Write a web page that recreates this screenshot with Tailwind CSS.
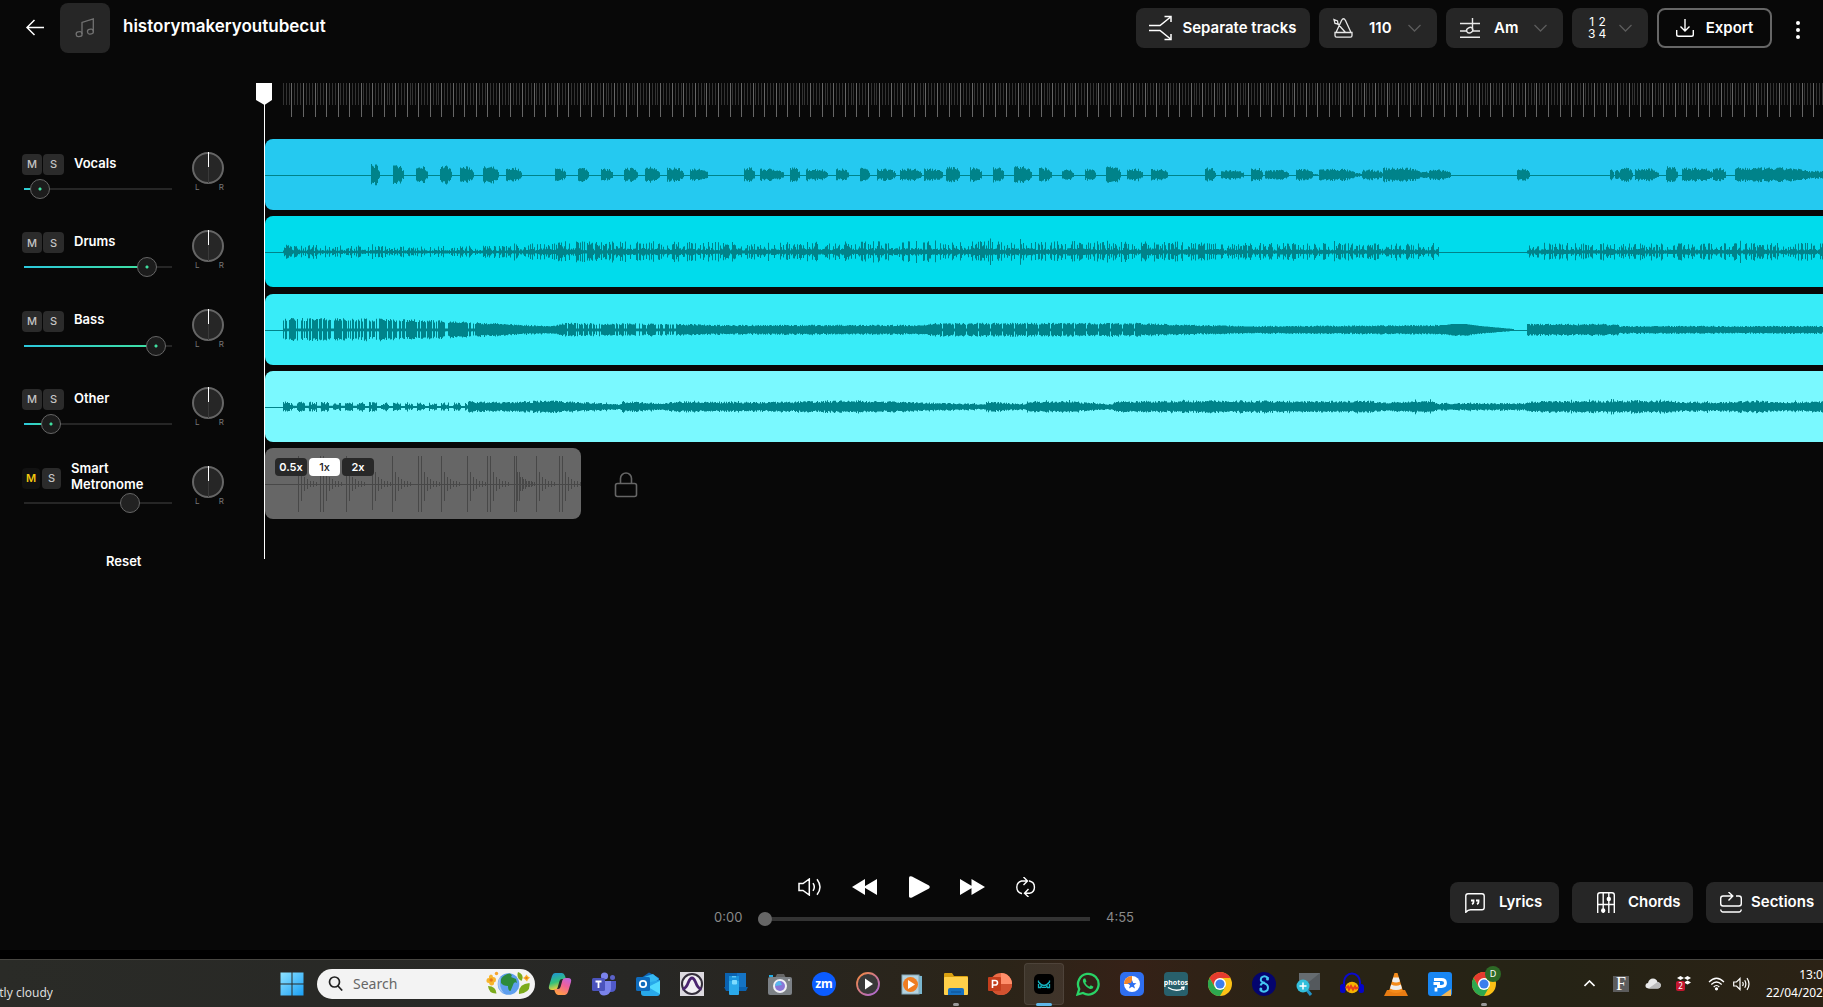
<!DOCTYPE html>
<html lang="en">
<head>
    <meta charset="UTF-8">
    <meta name="viewport" content="width=device-width, initial-scale=1.0">
    <title>historymakeryoutubecut</title>
    <!-- Tailwind CSS -->
    <script src="https://cdn.jsdelivr.net/npm/@tailwindcss/browser@4"></script>
</head>
<body class="h-screen overflow-hidden bg-black text-white font-['Inter','Liberation_Sans',sans-serif] flex flex-col">
    <div class="flex-1 min-h-0 mb-[9px] bg-[#080808] flex flex-col">

        <!-- Header -->
        <header class="flex items-start justify-between pl-[22px] pr-[10px] pt-[3px] h-[83px] shrink-0">
            <div class="flex items-center">
                <button aria-label="Back" class="w-[26px] h-8 flex items-center justify-center">
                    <svg class="w-[20px] h-[18px]" viewBox="0 0 20 18" fill="none" stroke="#fff" stroke-width="1.5"><path d="M19 8.5H2M9.500 1L2 8.500L9.500 16"/></svg>
                </button>
                <div class="ml-3 w-[50px] h-[50px] rounded-lg bg-[#262626] flex items-center justify-center">
                    <svg class="w-5 h-5" viewBox="0 0 20 20" fill="none" stroke="#727272" stroke-width="1.3"><path d="M7 16V4.500L18.300 1V13.500"/><rect x="1.200" y="13.800" width="5.800" height="4.800" rx="2.200" transform="rotate(-8 4 16)"/><rect x="12.500" y="11.300" width="5.800" height="4.800" rx="2.200" transform="rotate(-8 15 13.500)"/></svg>
                </div>
                <h1 class="ml-[13px] text-[17px] leading-6 font-semibold pb-1">historymakeryoutubecut</h1>
            </div>
            <div class="flex items-center pt-[5px]">
                <div class="flex gap-[9px] text-[15px] font-semibold">
                    <button class="h-10 w-[174px] rounded-lg bg-[#262626] flex items-center justify-center gap-[10px] whitespace-nowrap">
                        <svg class="w-[23px] h-8" viewBox="0 0 23 32" fill="none" stroke="#fff" stroke-width="1.5"><path d="M0 13.500H11L21 5.500M0 18.500H11L21 26.500M15.500 4.500H22V10M15.500 27.500H22V22"/></svg>
                        Separate tracks
                    </button>
                    <button class="h-10 w-[118px] rounded-lg bg-[#262626] flex items-center pl-[14px]">
                        <svg class="w-5 h-5" viewBox="0 0 20 20" fill="none" stroke="#e8e8e8" stroke-width="1.3"><path d="M3 14.500L8.500 2.500Q10.500 -1 12.500 2.500L18 14.500M2 14.500V17.500Q2 19.200 3.500 19.200H17.500Q19 19.200 19 17.500V14.500ZM12.500 14.500L4.500 5.500"/><path d="M1 1.500L4.500 3L5 6L2 5.500Z"/></svg>
                        <span class="ml-4">110</span>
                        <svg class="ml-auto mr-4 w-[13px] h-2" viewBox="0 0 13 8" fill="none" stroke="#5c5c5c" stroke-width="1.300"><path d="M0.500 1L6.500 7L12.500 1"/></svg>
                    </button>
                    <button class="h-10 w-[117px] rounded-lg bg-[#262626] flex items-center pl-[14px]">
                        <svg class="w-5 h-5" viewBox="0 0 20 20" fill="none" stroke="#e8e8e8" stroke-width="1.400"><path d="M0 5.500H20M0 13H7M13 13H20M0 19.200H20M12.500 0V12"/><ellipse cx="9.700" cy="12.200" rx="3.200" ry="2.600" transform="rotate(-25 9.700 12.200)"/></svg>
                        <span class="ml-[14px]">Am</span>
                        <svg class="ml-auto mr-4 w-[13px] h-2" viewBox="0 0 13 8" fill="none" stroke="#5c5c5c" stroke-width="1.300"><path d="M0.500 1L6.500 7L12.500 1"/></svg>
                    </button>
                    <button class="h-10 w-[76px] rounded-lg bg-[#262626] flex items-center pl-4">
                        <span class="grid grid-cols-2 gap-x-[3px] text-xs leading-3 font-normal text-center w-[18px]"><span>1</span><span>2</span><span>3</span><span>4</span></span>
                        <svg class="ml-auto mr-4 w-[13px] h-2" viewBox="0 0 13 8" fill="none" stroke="#5c5c5c" stroke-width="1.300"><path d="M0.500 1L6.500 7L12.500 1"/></svg>
                    </button>
                    <button class="h-10 w-[115px] rounded-lg border-2 border-[#666] flex items-center justify-center gap-3">
                        <svg class="w-[18px] h-[18px]" viewBox="0 0 18 18" fill="none" stroke="#fff" stroke-width="1.400"><path d="M9 0V11.500M4.500 7.500L9 12L13.500 7.500M0.700 11V15.500Q0.700 17.300 2.500 17.300H15.500Q17.300 17.300 17.300 15.500V11"/></svg>
                        Export
                    </button>
                </div>
                <button aria-label="More" class="ml-[11px] w-[30px] h-10 flex items-center justify-center">
                    <svg class="w-1 h-[18px] mt-1" viewBox="0 0 4 18" fill="#fff"><circle cx="2" cy="2" r="2"/><circle cx="2" cy="9" r="2"/><circle cx="2" cy="16" r="2"/></svg>
                </button>
            </div>
        </header>

        <!-- Mixer and timeline -->
        <main class="flex-1 min-h-0 grid grid-cols-[265px_1fr]">
            <section aria-label="Mixer" class="pt-[61px]">
                <div id="mixer" class="grid grid-rows-5 h-[392px]"></div>
                <button class="ml-[106px] mt-[15px] text-[13px] leading-5 font-semibold">Reset</button>
            </section>

            <section aria-label="Timeline" class="relative min-w-0">
                <svg id="ruler" class="block w-full h-[34px]" shape-rendering="crispEdges"></svg>
                <div id="lanes" class="mt-[22px] h-[380px] flex flex-col justify-between">
                    <div class="h-[71px] rounded-l-lg bg-[#25c9f0]"><svg data-wave="vocals" class="block w-full h-full"></svg></div>
                    <div class="h-[71px] rounded-l-lg bg-[#00dcec]"><svg data-wave="drums" class="block w-full h-full"></svg></div>
                    <div class="h-[71px] rounded-l-lg bg-[#38ecf8]"><svg data-wave="bass" class="block w-full h-full"></svg></div>
                    <div class="h-[71px] rounded-l-lg bg-[#7af9ff]"><svg data-wave="other" class="block w-full h-full"></svg></div>
                    <div class="flex items-center">
                        <div class="relative h-[71px] w-[316px] rounded-lg bg-[#666]">
                            <svg data-wave="metronome" class="block w-full h-full" shape-rendering="crispEdges"></svg>
                            <div class="absolute left-[10px] top-[10px] flex gap-0.5 text-[11px] font-semibold">
                                <button class="h-[18px] w-8 rounded bg-[#282828]">0.5x</button>
                                <button class="h-[18px] w-[31px] rounded bg-white text-[#222] font-medium">1x</button>
                                <button class="h-[18px] w-8 rounded bg-[#282828]">2x</button>
                            </div>
                        </div>
                        <svg class="ml-[33px] mt-0.5 w-6 h-[26px]" viewBox="0 0 24 26" fill="none" stroke="#666" stroke-width="1.600"><rect x="1.500" y="11.500" width="21" height="13" rx="2"/><path d="M6.500 11.500V6.500A5.500 5.500 0 0 1 17.500 6.500V11.500"/></svg>
                    </div>
                </div>
                <!-- Playhead -->
                <svg class="absolute -left-[9px] top-0 w-[17px] h-[476px]" viewBox="0 0 17 476"><path d="M0 0H16V17L8.500 22L0 17Z" fill="#fff"/><rect x="8" y="20" width="1" height="456" fill="#fff" shape-rendering="crispEdges"/></svg>
            </section>
        </main>

        <!-- Player -->
        <footer class="shrink-0 h-[77px] pl-[25px] grid grid-cols-[1fr_auto_1fr]">
            <div></div>
            <div class="w-[420px]">
                <div class="flex items-center h-7 pl-[84px]">
                    <button aria-label="Volume" class="w-6"><svg class="w-6 h-[18px]" viewBox="0 0 24 18" fill="none" stroke="#fff" stroke-width="1.500"><path d="M1 5.500H5L11.300 1V17L5 12.500H1ZM15 5.200Q17.600 9 15 12.800M19 1.200Q25 9 19 16.800"/></svg></button>
                    <button aria-label="Rewind" class="ml-[30px] w-[25px]"><svg class="w-[25px] h-4" viewBox="0 0 25 16" fill="#fff"><path d="M13 0V16L0 8ZM25 0V16L11.500 8Z"/></svg></button>
                    <button aria-label="Play" class="ml-8 w-[21px]"><svg class="w-[21px] h-[22px]" viewBox="0 0 21 22" fill="#fff"><path d="M0 1.500Q0.500 -0.500 3 0.500L20 9.500Q21.500 11 20 12.500L3 21.500Q0.500 22.500 0 20.500Z"/></svg></button>
                    <button aria-label="Forward" class="ml-[30px] w-[25px]"><svg class="w-[25px] h-4" viewBox="0 0 25 16" fill="#fff"><path d="M0 0V16L13.500 8ZM11.500 0V16L25 8Z"/></svg></button>
                    <button aria-label="Loop" class="ml-[29px] w-[23px]"><svg class="w-[23px] h-5" viewBox="0 0 23 20" fill="none" stroke="#fff" stroke-width="1.400"><path d="M8 16.500H7.500A6.500 6.500 0 0 1 7.500 4H13M9.500 0L13.500 4L9.500 8M15 4H15.500A6.300 6.300 0 0 1 15.500 16.300H11M14.500 12L10.500 16.200L14.500 20"/></svg></button>
                </div>
                <div class="flex items-center h-5 mt-2 text-[13px] text-[#8a8a8a]">
                    <span class="w-11 pb-0.5">0:00</span>
                    <input type="range" aria-label="Position" min="0" max="295" value="0" class="w-[332px] h-4 appearance-none bg-[linear-gradient(#333,#333)] bg-[length:100%_4px] bg-center bg-no-repeat [&::-webkit-slider-thumb]:appearance-none [&::-webkit-slider-thumb]:size-[14px] [&::-webkit-slider-thumb]:rounded-full [&::-webkit-slider-thumb]:bg-[#666]">
                    <span class="ml-auto pb-0.5">4:55</span>
                </div>
            </div>
            <div class="flex justify-end items-start gap-[13px] pt-[9px] -mr-2 text-[15px] font-semibold">
                <button class="h-[41px] w-[109px] rounded-lg bg-[#262626] flex items-center pl-[15px] gap-[14px]">
                    <svg class="w-5 h-5" viewBox="0 0 20 20" fill="none" stroke="#fff" stroke-width="1.400"><path d="M0.800 19.200V3Q0.800 0.800 3 0.800H17Q19.200 0.800 19.200 3V14.500Q19.200 16.700 17 16.700H5.500Q3 16.700 0.800 19.200Z"/><path d="M6 7.500H8.500V9Q8.500 10.500 7 11.200M11 7.500H13.500V9Q13.500 10.500 12 11.200" stroke-width="1.800"/></svg>
                    Lyrics
                </button>
                <button class="h-[41px] w-[121px] rounded-lg bg-[#262626] flex items-center pl-[25px] gap-[13px]">
                    <svg class="w-[18px] h-[21px]" viewBox="0 0 18 21" fill="none" stroke="#fff" stroke-width="1.400"><path d="M0.700 21V3Q0.700 0.700 3 0.700H15Q17.300 0.700 17.300 3V21M6.200 1V21M11.800 1V21M0.700 12.500H17.300"/><circle cx="11.800" cy="7" r="1.500" fill="#fff"/><circle cx="6.200" cy="18.500" r="1.500" fill="#fff"/></svg>
                    Chords
                </button>
                <button class="h-[41px] w-[125px] rounded-lg bg-[#262626] flex items-center pl-[14px] gap-[9px]">
                    <svg class="w-[22px] h-[21px]" viewBox="0 0 22 21" fill="none" stroke="#fff" stroke-width="1.400"><path d="M6 14H3Q0.700 14 0.700 11.500V6.500Q0.700 4 3 4H12.500M8.500 0L12.800 4L8.500 8.500M16 4H19Q21.300 4 21.300 6.500V11.500Q21.300 14 19 14H6M0.700 17.500Q1 20 3 20H19Q21 20 21.300 17.500"/></svg>
                    Sections
                </button>
            </div>
        </footer>
    </div>

    <!-- Taskbar -->
    <nav class="relative shrink-0 h-12 border-t border-[#474641] bg-[linear-gradient(90deg,#2a2b27,#272725_35%,#2b2418_55%,#352117_62%,#2a2315_70%,#252315_85%,#2b2215)] flex items-center font-['Noto_Sans','Open_Sans',sans-serif]">
        <div class="w-[53px] overflow-hidden flex justify-end text-xs leading-[18px] text-[#ddd]">
            <div class="whitespace-nowrap shrink-0"><div class="text-white">9°C</div>Partly cloudy</div>
        </div>
        <button aria-label="Start" class="ml-[227px] w-6"><svg class="w-6 h-6" viewBox="0 0 24 24"><defs><linearGradient id="win" x2="1" y2="1"><stop stop-color="#8fe2ff"/><stop offset="1" stop-color="#1aa0f5"/></linearGradient></defs><path d="M0.500 0.500h11v11h-11zM12.500 0.500h11v11h-11zM0.500 12.500h11v11h-11zM12.500 12.500h11v11h-11z" fill="url(#win)"/></svg></button>
        <div class="ml-[13px] w-[218px] h-[30px] rounded-full bg-[#f3f3f3] flex items-center pl-[11px] pr-[5px]">
            <svg class="w-[15px] h-[15px] shrink-0" viewBox="0 0 15 15" fill="none" stroke="#222" stroke-width="1.700"><circle cx="6.500" cy="6" r="5"/><path d="M10 10L14.200 14.500"/></svg>
            <input type="text" aria-label="Search" placeholder="Search" class="ml-[10px] w-0 flex-1 bg-transparent text-sm outline-none placeholder:text-[#666]">
            <svg class="w-11 h-[25px]" viewBox="0 0 44 25">
                <path d="M5 3.500Q7 3.500 7 6Q10 6 10 9Q10 11 8 11.500Q8.500 14.500 5.500 14.500Q3.500 14.500 3 12Q0 12 0.500 9Q0.500 7 3 7Q2.500 4 5 3.500Z" fill="#f7b52c"/><circle cx="5.200" cy="9" r="1.700" fill="#e5791c"/><circle cx="10.500" cy="2.500" r="1.700" fill="#f7a52c"/>
                <path d="M2 15Q10 15 10.500 22.500Q3 23 2 15ZM32 1Q39 4 35.500 10Q30 7 32 1ZM33 23Q32 13 43.500 12Q45 22 33 23Z" fill="#7cab1c"/>
                <circle cx="22.500" cy="13" r="10.800" fill="#5e9fee"/><path d="M15 5.500A10.800 10.800 0 0 0 18 22.500Q12 15 15 5.500Z" fill="#a3c7f7"/>
                <path d="M15 8Q18 3 24 2.500Q27 4 25 6L30 8L31 12Q28 10 27 14L24.500 20Q22 20 22 15Q17 15 15 12Z" fill="#2d8b3c"/>
                <path d="M40.500 3.500L42 5.500L44 6.500L42 8.500L41 10.500L39 8.500L37 7L39 5.500Z" fill="#f7b52c"/><circle cx="40.500" cy="7" r="1.200" fill="#e5791c"/>
            </svg>
        </div>
        <div class="ml-[3px] flex [&>button]:w-11 [&>button]:h-11 [&>button]:flex [&>button]:items-center [&>button]:justify-center [&_svg]:size-6">
            <button aria-label="Copilot"><svg viewBox="0 0 24 24"><defs><linearGradient id="cp1" x2="0.300" y2="1"><stop stop-color="#1c8fe0"/><stop offset=".6" stop-color="#33c07a"/><stop offset="1" stop-color="#f2d03c"/></linearGradient><linearGradient id="cp2" x1="1" x2="0.500" y2="1"><stop stop-color="#b866e8"/><stop offset=".5" stop-color="#f0609a"/><stop offset="1" stop-color="#ff9a4a"/></linearGradient></defs><path d="M7 1H14Q16 1 17 4L18 7H14Q12 7 11.500 9L9.500 16Q9 18 6 18H4Q0 18 1 14L4 4Q5 1 7 1Z" fill="url(#cp1)"/><path d="M17 23H10Q8 23 7 20L6 17H10Q12 17 12.500 15L14.500 8Q15 6 18 6H20Q24 6 23 10L20 20Q19 23 17 23Z" fill="url(#cp2)"/></svg></button>
            <button aria-label="Teams"><svg viewBox="0 0 24 24"><circle cx="12.500" cy="4" r="3.600" fill="#7b83eb"/><circle cx="20.500" cy="5.500" r="2.500" fill="#5b62c8"/><path d="M17 9H24V15Q24 20 19 20H16Z" fill="#5059c9"/><path d="M7 9H19V17Q18 23.500 12 23.500Q8 23.500 7 19Z" fill="#7b83eb"/><rect y="6" width="13" height="13" rx="1.500" fill="#4b53bc"/><path d="M3.500 9.500H9.500M6.500 9.500V16" stroke="#fff" stroke-width="1.800"/></svg></button>
            <button aria-label="Outlook"><svg viewBox="0 0 24 24"><path d="M5 6L13 0.500L23 6V14H5Z" fill="#1066b8"/><path d="M8 5L17 2L23 7L14 14Z" fill="#35b8f1"/><path d="M5 12L24 8V21Q24 24 21 24H8Q5 24 5 21Z" fill="#28a8ea"/><path d="M24 9V22L12 15Z" fill="#50d9ff"/><rect y="5" width="14" height="14" rx="1.500" fill="#0f6cbd"/><circle cx="7" cy="12" r="3.200" fill="none" stroke="#fff" stroke-width="1.800"/></svg></button>
            <button aria-label="Pro Tools"><svg viewBox="0 0 24 24"><rect width="24" height="24" fill="#dcd9df"/><circle cx="12" cy="12" r="10" fill="#f2eff4" stroke="#332d3a" stroke-width="2"/><path d="M2.500 17Q6 17 8.500 10Q12 2 15.500 10Q18 17 21.500 17" fill="none" stroke="#4b2470" stroke-width="2.800"/></svg></button>
            <button aria-label="Phone Link"><svg viewBox="0 0 24 24"><path d="M1 1H22V15H24L22 19H2L0 15H1Z" fill="#0a62b0"/><path d="M13 1H22V15H13Z" fill="#1473c4"/><rect x="5" y="4" width="10" height="19" rx="1" fill="#2ba9ea"/><path d="M5 4H15V9H5Z" fill="#1b93dc"/><path d="M8 4.800H12M8.500 8.500H12.500V12H8.500Z" fill="#7fdcff" stroke="#7fdcff"/></svg></button>
            <button aria-label="Camera"><svg viewBox="0 0 24 24"><path d="M7 6L9 2H16L18 6Z" fill="#666"/><rect x="0" y="5" width="24" height="18" rx="2" fill="#7c8186"/><rect x="1" y="3" width="4" height="2" fill="#22aee6"/><circle cx="12" cy="14" r="7" fill="#f0f0f5"/><circle cx="12" cy="14" r="5" fill="#8a76d6"/><path d="M7 14A5 5 0 0 1 12 9L14 13Z" fill="#58b7ee"/><circle cx="21" cy="8" r="1" fill="#ddd"/></svg></button>
            <button aria-label="Zoom"><svg viewBox="0 0 24 24"><circle cx="12" cy="12" r="12" fill="#0b5cff"/><text x="12" y="16" text-anchor="middle" font-size="12" font-weight="700" fill="#fff">zm</text></svg></button>
            <button aria-label="Media Player"><svg viewBox="0 0 24 24"><defs><linearGradient id="mp" x2="1" y2="1"><stop stop-color="#f58a3c"/><stop offset="1" stop-color="#a866dd"/></linearGradient></defs><circle cx="12" cy="12" r="11" fill="#383838" stroke="url(#mp)" stroke-width="1.800"/><path d="M9 6.500L17 12L9 17.500Z" fill="#fff"/></svg></button>
            <button aria-label="Windows Media Player"><svg viewBox="0 0 24 24"><path d="M8 3L22 4V22L8 22Z" fill="#7ab6cf"/><rect x="2" y="3" width="17" height="19" fill="#b5d3e0" stroke="#86a9ba"/><circle cx="10.500" cy="12.500" r="7.500" fill="#ef7d22"/><path d="M8 8L15 12.500L8 17Z" fill="#fff"/></svg></button>
            <button aria-label="File Explorer" class="relative"><svg viewBox="0 0 24 24"><path d="M0 2Q0 1 1 1H8L10 4H23Q24 4 24 5V10H0Z" fill="#d9a010"/><rect y="5" width="24" height="18" rx="1" fill="#ffd04a"/><path d="M4 23V18Q4 16 6 16H18Q20 16 20 18V23Z" fill="#1670c0"/><path d="M7 20H17" stroke="#0d4f90"/></svg><i class="absolute bottom-0 w-1.5 h-[3px] rounded-full bg-[#999]"></i></button>
            <button aria-label="PowerPoint"><svg viewBox="0 0 24 24"><circle cx="13" cy="12" r="11" fill="#ed6c47"/><path d="M13 1A11 11 0 0 1 24 12H13Z" fill="#ff8f6b"/><path d="M2 12A11 11 0 0 0 24 12Z" fill="#d35230"/><rect y="5" width="13" height="14" rx="1" fill="#c43e1c"/><path d="M4.500 16V8.500H7Q9.500 8.500 9.500 10.700Q9.500 13 7 13H4.500" fill="none" stroke="#fff" stroke-width="1.600"/></svg></button>
            <button aria-label="Moises" class="relative"><i class="absolute inset-x-0.5 inset-y-0.5 -my-px rounded bg-white/8 border border-white/8"></i><svg class="relative" viewBox="0 0 24 24"><rect x="2" y="2" width="20" height="20" rx="5" fill="#000"/><path d="M6.500 8.500V10Q9.500 13.500 12 13.500Q14.500 13.500 17.500 10V8.500M6.500 12V15.500H9M17.500 12V15.500H15M8.500 13.500L10 15.300H14L15.500 13.500" fill="none" stroke="#14b4c0" stroke-width="1.300"/></svg><i class="absolute bottom-0 w-4 h-[3px] rounded-full bg-[#60b8ea]"></i></button>
            <button aria-label="WhatsApp"><svg viewBox="0 0 24 24" fill="none"><path d="M1.500 22.500L3.200 17A10.300 10.300 0 1 1 7 21Z" stroke="#29d366" stroke-width="2.300"/><path d="M8 6.500Q6 8 7.500 11Q10 15.500 14 17Q17 17.500 17.500 14.800L14.800 13.300L13.300 14.800Q10.500 13.500 9.300 10.800L10.500 9.500L9.300 6.500Z" fill="#29d366"/></svg></button>
            <button aria-label="Disk tool"><svg viewBox="0 0 24 24"><rect width="24" height="24" rx="5" fill="#2f6ff0"/><circle cx="12" cy="12" r="8" fill="#fff"/><path d="M12 4A8 8 0 0 0 4 12H12Z" fill="#f0842a"/><path d="M12 8L13.200 11L16.500 11.200L14 13.300L15 16.500L12 14.700L9 16.500L10 13.300L7.500 11.200L11 11Z" fill="#2f6ff0"/></svg></button>
            <button aria-label="Amazon Photos"><svg viewBox="0 0 24 24"><rect width="24" height="24" rx="4" fill="#28606c"/><text x="12" y="12.500" text-anchor="middle" font-size="7" font-weight="700" fill="#fff">photos</text><path d="M4 15.500Q12 20.500 19 16.500M17 15.500L20 15L19.500 18" fill="none" stroke="#fff" stroke-width="1.400"/></svg></button>
            <button aria-label="Chrome"><svg viewBox="0 0 24 24"><circle cx="12" cy="12" r="12" fill="#fbc116"/><path d="M1.600 6A12 12 0 0 1 22.400 6H12L6.800 15Z" fill="#e53b2f"/><path d="M1.600 6A12 12 0 0 0 12 24L17.200 15H6.800Z" fill="#2da84f"/><circle cx="12" cy="12" r="6" fill="#fff"/><circle cx="12" cy="12" r="4.600" fill="#3b7ded"/></svg></button>
            <button aria-label="Sibelius"><svg viewBox="0 0 24 24"><circle cx="12" cy="12" r="12" fill="#04046e"/><path d="M16.500 6.500Q13 2.500 9.500 5.500Q7.500 9 11 10.500L14 12Q17 14 15.500 18Q12 21.500 8 18M8.500 13.500Q9.500 10.500 13 10.800" fill="none" stroke="#45c6f2" stroke-width="2"/><circle cx="15.500" cy="7" r="1.500" fill="#45c6f2"/><circle cx="8.800" cy="17" r="1.500" fill="#45c6f2"/></svg></button>
            <button aria-label="Magnifier"><svg viewBox="0 0 24 24"><rect x="3" y="1" width="21" height="17" fill="#666c70"/><path d="M3 18L24 1V18Z" fill="#54595d"/><path d="M11 18L15 23" stroke="#2293c5" stroke-width="3"/><circle cx="7" cy="14" r="6.500" fill="#33bfdc"/><path d="M3.500 14H10.500M7 10.500V17.500" stroke="#fff" stroke-width="1.500"/></svg></button>
            <button aria-label="Audacity"><svg viewBox="0 0 24 24"><path d="M4 16V10A8 8.500 0 0 1 20 10V16" fill="none" stroke="#0a0ad0" stroke-width="2"/><rect x="0" y="12" width="5.500" height="9" rx="2.500" fill="#0505c8"/><rect x="18.500" y="12" width="5.500" height="9" rx="2.500" fill="#0505c8"/><ellipse cx="12" cy="15.500" rx="6.500" ry="5.800" fill="#f5b400"/><path d="M6 16L8 14.500L9 17.500L11 14L13 17.500L15 14.500L16 16.500L18 15.500" stroke="#e8401a" stroke-width="2" fill="none"/></svg></button>
            <button aria-label="VLC"><svg viewBox="0 0 24 24"><path d="M3 18H21L24 24H0Z" fill="#e87c12"/><path d="M10.500 1H13.500L19 19Q12 23 5 19Z" fill="#f48b1b"/><path d="M9.200 5.500H14.800L16 9.500Q12 11.500 8 9.500ZM7.200 12.500Q12 15 16.800 12.500L18 16.500Q12 19.500 6 16.500Z" fill="#eee"/></svg></button>
            <button aria-label="PDF editor"><svg viewBox="0 0 24 24"><rect width="24" height="24" rx="3" fill="#1886f2"/><path d="M8 19.500V15.500M6 7.500H13.500Q17.500 7.500 17.500 11Q17.500 14.500 13.500 14.500H9M5.500 11.500H12" fill="none" stroke="#fff" stroke-width="2.800"/><path d="M13 24L23 17V24Z" fill="#f0b758"/></svg></button>
            <button aria-label="Chrome profile D" class="relative"><svg viewBox="0 0 24 24"><circle cx="12" cy="12" r="12" fill="#fbc116"/><path d="M1.600 6A12 12 0 0 1 22.400 6H12L6.800 15Z" fill="#e53b2f"/><path d="M1.600 6A12 12 0 0 0 12 24L17.200 15H6.800Z" fill="#2da84f"/><circle cx="12" cy="12" r="6" fill="#fff"/><circle cx="12" cy="12" r="4.600" fill="#3b7ded"/></svg><span class="absolute right-[5px] top-1 size-4 rounded-full bg-[#2d6a26] text-[9px] leading-4 text-center text-white">D</span><i class="absolute bottom-0 w-1.5 h-[3px] rounded-full bg-[#999]"></i></button>
        </div>
        <!-- System tray -->
        <div class="ml-auto flex items-center">
            <svg class="w-[11px] h-[7px]" viewBox="0 0 11 7" fill="none" stroke="#fff" stroke-width="1.600"><path d="M0.500 6L5.500 1L10.500 6"/></svg>
            <span class="ml-[18px] w-4 h-4 bg-[#5c5c5c] text-center text-[18px] leading-4 font-['Liberation_Serif',serif]">F</span>
            <svg class="ml-4 w-4 h-[11px]" viewBox="0 0 16 11"><path d="M3.500 10.500Q0 10 0.500 7Q1 5 3 5Q4 0.500 8 0.500Q11.500 0.500 12.500 4Q16 4.500 15.800 7.500Q15.500 10.500 12.500 10.500Z" fill="#e9e9e9"/><path d="M3.500 10.500L12.500 4Q16 4.500 15.800 7.500Q15.500 10.500 12.500 10.500Z" fill="#bbb"/></svg>
            <svg class="ml-[15px] w-4 h-[17px]" viewBox="0 0 16 17"><path d="M1 3L4.500 1L8 3L4.500 5ZM8 3L11.500 1L15 3L11.500 5ZM8 7.500L11.500 5.500L15 7.500L11.500 9.500Z" fill="#fff"/><rect x="0" y="6" width="9" height="10" rx="2" fill="#c4162f"/><text x="4.500" y="14" text-anchor="middle" font-size="8" fill="#fff">2</text></svg>
            <svg class="ml-4 w-[17px] h-[14px]" viewBox="0 0 17 14" fill="none" stroke="#fff" stroke-width="1.200"><path d="M1 5Q8.500 -2.500 16 5M3.300 7.500Q8.500 2.500 13.700 7.500M5.700 10Q8.500 7 11.300 10"/><circle cx="8.500" cy="11.800" r="1" fill="#fff"/></svg>
            <svg class="ml-2 w-[17px] h-[14px]" viewBox="0 0 17 14" fill="none" stroke="#fff" stroke-width="1.200"><path d="M0.700 5H3.500L7 1.500V12.500L3.500 9H0.700ZM9.500 5Q11 7 9.500 9M11.700 3.200Q14 7 11.700 10.800M14 1.200Q18 7 14 12.800"/></svg>
            <div class="ml-4 w-[57px] overflow-hidden text-xs leading-[18px]">
                <div class="w-max text-right whitespace-nowrap"><div>13:06</div>22/04/2025</div>
            </div>
        </div>
    </nav>

    <script>
        const tracks = [
            { name: 'Vocals', level: 5, fill: 16 },
            { name: 'Drums', level: 88, fill: 123 },
            { name: 'Bass', level: 95, fill: 132 },
            { name: 'Other', level: 13, fill: 26 },
            { name: 'Smart Metronome', level: 75, fill: 0, muted: true },
        ];

        document.getElementById('mixer').innerHTML = tracks.map((t) => `
            <div class="flex pl-[22px]">
                <div class="w-[150px] pt-[10px]">
                    <div class="flex items-center h-[21px]">
                        <button aria-label="Mute ${t.name}" class="${t.muted
                            ? 'h-[21px] w-[18px] rounded bg-[#121212] text-[#f4c80e] text-[11px] font-semibold'
                            : 'h-[21px] w-5 rounded bg-[#2b2b2b] text-[#c4c4c4] text-[11px] font-medium'}">M</button>
                        <button aria-label="Solo ${t.name}" class="${t.muted ? 'ml-0.5 w-[19px]' : 'ml-px w-[21px]'} h-[21px] rounded bg-[#2b2b2b] text-[#c4c4c4] text-[11px] font-medium">S</button>
                        <label for="vol-${t.level}" class="ml-[10px] w-[75px] text-[13px] leading-4 font-semibold pb-1">${t.name}</label>
                    </div>
                    <input id="vol-${t.level}" type="range" min="0" max="100" value="${t.level}"
                        style="background-image:linear-gradient(90deg,#2cc8dc,#3fe0a0 ${t.fill}px,#262626 ${t.fill}px)"
                        class="block ml-0.5 mt-1 w-[148px] h-5 appearance-none bg-[length:100%_2px] bg-center bg-no-repeat [&::-webkit-slider-thumb]:appearance-none [&::-webkit-slider-thumb]:size-5 [&::-webkit-slider-thumb]:rounded-full [&::-webkit-slider-thumb]:border [&::-webkit-slider-thumb]:border-[#666] ${t.muted
                            ? '[&::-webkit-slider-thumb]:bg-[#222]'
                            : '[&::-webkit-slider-thumb]:bg-[radial-gradient(circle,#3fe0a0_1px,#1c1c1c_2px)]'}">
                </div>
                <div class="ml-5 w-8 pt-2">
                    <svg class="block w-8 h-8" viewBox="0 0 32 32"><circle cx="16" cy="16" r="15" fill="#262626" stroke="#666" stroke-width="2"/><path d="M16.500 15V31" stroke="#3a3a3a"/><path d="M16.500 0V15" stroke="#fff"/></svg>
                    <div class="flex justify-between pl-[3px] text-[8px] leading-[7px] text-[#777]"><span>L</span><span>R</span></div>
                </div>
            </div>`).join('');

        // Ruler: one tick per beat, a long one per bar
        let short = '', long = '';
        for (let i = 0; i < 1400; i++) {
            const x = Math.floor(18.3 + i * 2.882);
            if (i % 4 === 3) long += `M${x} 0v34h1v-34z`;
            else short += `M${x} 0v22h1v-22z`;
        }
        document.getElementById('ruler').innerHTML = `<path d="${short}" fill="#333"/><path d="${long}" fill="#666"/>`;

        // Small repeatable random generator
        let seed = 7;
        const rnd = () => (seed = (seed * 16807) % 2147483647) / 2147483647;

        const phrases = [
            [106,114,10],[128,138,9],[151,162,8],[175,186,9],[195,208,8],[218,233,8],[241,256,7],[290,300,6],[313,323,7],
            [336,347,6],[359,372,7],[380,394,8],[402,418,7],[425,442,6],[479,489,7],[495,518,6],[525,534,7],[541,562,6],
            [571,583,6],[595,604,7],[612,630,6],[635,656,6],[659,677,6],[681,694,8],[705,716,7],[728,738,8],[749,766,8],
            [774,786,7],[797,808,5],[820,830,6],[841,855,8],[862,877,6],[886,902,6],[940,950,7],[956,978,5],[986,997,7],
            [1000,1023,5],[1031,1047,6],[1047,1053,1],[1054,1089,6],[1089,1096,2],[1096,1117,5],[1117,1157,7],[1158,1163,4],
            [1164,1185,5],[1252,1264,6],[1345,1348,6],[1350,1354,5],[1355,1367,7],[1370,1393,6],[1401,1412,8],[1417,1447,7],
            [1448,1460,7],[1470,1548,7],[1548,1570,4],
        ];
        // [x, amplitude] points, joined by straight lines
        const envelopes = {
            drums: [[17,0],[18,8],[110,7],[170,6],[200,7],[235,7],[270,10],[280,12],[370,12],[500,11],[700,13],[860,12],[1000,10],[1173,10],[1174,0],[1261,0],[1262,11],[1340,10],[1900,10]],
            bass: [[17,0],[18,12],[120,11],[195,9],[225,7],[262,5],[285,4],[300,7],[430,6],[445,5],[660,5],[670,7],[870,7],[930,5],[1000,4],[1180,5],[1187,6],[1200,6],[1215,4],[1248,1],[1249,0],[1261,0],[1262,6],[1353,6],[1354,4],[1900,4]],
            other: [[17,0],[18,5],[202,4],[203,6],[240,5],[280,7],[320,5],[355,3],[357,6],[400,4],[410,6],[500,5],[585,7],[650,5],[720,3],[721,6],[760,3],[762,6],[800,6],[846,3],[850,6],[950,7],[1050,6],[1095,7],[1120,5],[1165,7],[1174,4],[1261,4],[1262,6],[1380,7],[1450,5],[1495,7],[1510,5],[1570,6],[1900,6]],
        };
        const level = (pts, x) => {
            for (let i = 1; i < pts.length; i++) {
                const [x0, a0] = pts[i - 1], [x1, a1] = pts[i];
                if (x >= x0 && x <= x1) return a0 + (a1 - a0) * (x - x0) / (x1 - x0);
            }
            return 0;
        };

        function amplitude(name, x) {
            if (name === 'vocals') {
                const p = phrases.find(([s, e]) => x >= s && x <= e);
                if (!p) return 0;
                const t = (x - p[0]) / (p[1] - p[0]);
                return p[2] * (t < 0.7 ? 1 : 2.2 - 1.7 * t) * (0.65 + rnd() * 0.45);
            }
            const a = level(envelopes[name], x);
            if (name === 'drums') {
                const hit = rnd() < 0.45;
                return a * (hit ? 0.45 + rnd() * 0.5 : 0.15 + rnd() * 0.2) * (rnd() < 0.04 ? 1.2 : 0.95);
            }
            if (name === 'bass') {
                const smooth = x > 1174 && x < 1260;
                const gap = (x < 210 && rnd() < 0.24) || (x > 300 && x < 420 && rnd() < 0.15) || (x > 670 && x < 870 && x % 12 === 5);
                return gap ? 1.5 : a * (smooth ? 1 : 0.75 + rnd() * 0.3);
            }
            if (x < 203) return (x - 20) % 12 < 8 ? a * (0.4 + rnd() * 0.7) : a * 0.25;
            return a * (0.65 + rnd() * 0.35) * (rnd() < 0.04 ? 1.2 : 1);
        }

        for (const name of ['vocals', 'drums', 'bass', 'other']) {
            let d = 'M0 36H4000v1H0z';
            for (let x = 18; x < 1900; x++) {
                const up = amplitude(name, x);
                const down = up * (0.8 + rnd() * 0.2);
                if (up > 0.5) d += `M${x} ${(36 - up).toFixed(1)}h1V${(36 + down).toFixed(1)}h-1z`;
            }
            document.querySelector(`[data-wave=${name}]`).innerHTML = `<path d="${d}" fill="#00838a"/>`;
        }

        // Metronome clicks, each with a short decay
        let clicks = 'M0 36h316v1H0z';
        [33, 55, 58, 81, 107, 127, 153, 156, 176, 202, 222, 225, 249, 251, 271, 294, 297].forEach((x, i) => {
            clicks += i === 4 ? `M${x} 25h1v37h-1z` : `M${x} 8h1v56h-1z`;
            [12, 7, 5, 3, 3, 2].forEach((a, k) => { clicks += `M${x + 3 + k * 3} ${36 - a}h1v${a * 2 + (k ? 0 : 5)}h-1z`; });
        });
        document.querySelector('[data-wave=metronome]').innerHTML = `<path d="${clicks}" fill="#484848"/>`;
    </script>
</body>
</html>
